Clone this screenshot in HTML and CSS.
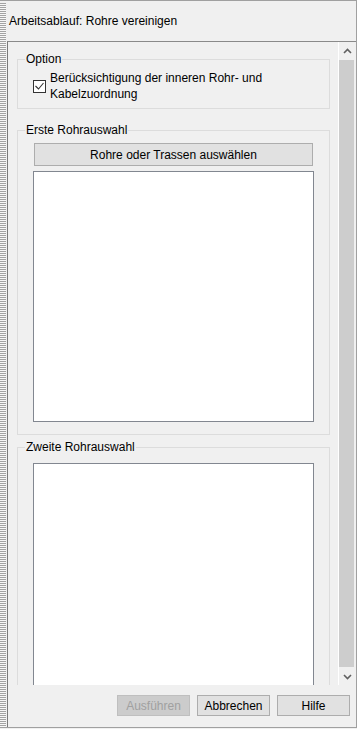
FILE: index.html
```html
<!DOCTYPE html>
<html lang="de">
<head>
    <meta charset="UTF-8">
    <meta name="viewport" content="width=device-width, initial-scale=1.0">
    <title>Rohre vereinigen</title>
    <link rel="stylesheet" href="styles.css">
</head>
<body>
    <div class="window">
        <div class="grip"></div>
        <div class="main">
            <div class="title">Arbeitsablauf: Rohre vereinigen</div>
            <div class="panel">
                <div class="scroll-area">
                    <div class="content">
                        <fieldset class="group">
                            <legend>Option</legend>
                            <label class="check-row">
                                <span class="checkbox">
                                    <svg width="11" height="11" viewBox="0 0 11 11">
                                        <polyline points="1.5,5 4.5,8 9.5,2" fill="none" stroke="#333" stroke-width="1.1"/>
                                    </svg>
                                </span>
                                <span class="check-text">Berücksichtigung der inneren Rohr- und Kabelzuordnung</span>
                            </label>
                        </fieldset>

                        <fieldset class="group first">
                            <legend>Erste Rohrauswahl</legend>
                            <button class="btn wide">Rohre oder Trassen auswählen</button>
                            <div class="list"></div>
                        </fieldset>

                        <fieldset class="group second">
                            <legend>Zweite Rohrauswahl</legend>
                            <div class="list tall"></div>
                        </fieldset>
                    </div>
                    <div class="scrollbar">
                        <div class="arrow">
                            <svg width="9" height="6" viewBox="0 0 9 6">
                                <polyline points="1,5 4.5,1.5 8,5" fill="none" stroke="#606060" stroke-width="1.6"/>
                            </svg>
                        </div>
                        <div class="thumb"></div>
                        <div class="arrow">
                            <svg width="9" height="6" viewBox="0 0 9 6">
                                <polyline points="1,1 4.5,4.5 8,1" fill="none" stroke="#606060" stroke-width="1.6"/>
                            </svg>
                        </div>
                    </div>
                </div>
                <div class="footer">
                    <button class="btn" disabled>Ausführen</button>
                    <button class="btn">Abbrechen</button>
                    <button class="btn">Hilfe</button>
                </div>
            </div>
        </div>
    </div>
</body>
</html>
```

FILE: styles.css
```css
* {
    margin: 0;
    padding: 0;
    box-sizing: border-box;
    font-family: "Liberation Sans", Arial, sans-serif;
}

body {
    background: #f0f0f0;
    font-size: 12px;
    color: #000;
}

.window {
    width: 357px;
    height: 728px;
    display: flex;
    background: #f0f0f0;
    border-top: 1px solid #a0a0a0;
    border-right: 1px solid #a0a0a0;
    border-bottom: 1px solid #a0a0a0;
}

/* striped resize grip on the left edge */
.grip {
    width: 6px;
    margin-top: 2px;
    background: repeating-linear-gradient(to bottom, #a3a3a3 0 1px, #f7f7f7 1px 2px);
}

.main {
    flex: 1;
    display: flex;
    flex-direction: column;
}

.title {
    height: 40px;
    padding: 13px 0 0 3px;
    line-height: 14px;
}

.panel {
    flex: 1;
    margin-left: 1px;
    display: flex;
    flex-direction: column;
    border-top: 1px solid #8a8a8a;
    border-left: 1px solid #7a7a7a;
}

.scroll-area {
    height: 643px;
    display: flex;
}

.content {
    flex: 1;
    overflow: hidden;
    padding: 10px 8px 0 9px;
}

.group {
    border: 1px solid #dcdcdc;
    line-height: 14px;
}

.group legend {
    margin-left: -8px;
    padding: 0 1px;
    line-height: 14px;
}

.group:first-child {
    padding: 4px 15px 6px 15px;
}

.group.first {
    margin-top: 14px;
    padding: 6px 15px 12px 15px;
}

.group.second {
    margin-top: 5px;
    padding: 9px 15px 0 15px;
}

.check-row {
    display: flex;
    align-items: center;
    line-height: 16px;
}

.checkbox {
    flex: none;
    width: 13px;
    height: 13px;
    margin-right: 4px;
    border: 1px solid #333;
    background: #fff;
    display: flex;
    align-items: center;
    justify-content: center;
}

.check-text {
    padding-right: 30px;
}

.btn {
    height: 21px;
    width: 73px;
    background: #e1e1e1;
    border: 1px solid #adadad;
    font-size: 12px;
    color: #000;
}

.btn:disabled {
    background: #cccccc;
    border-color: #bfbfbf;
    color: #a0a0a0;
}

.btn.wide {
    display: block;
    width: 279px;
    height: 23px;
    margin: 0 1px;
}

.list {
    height: 251px;
    margin-top: 5px;
    background: #fff;
    border: 1px solid #828790;
}

.group.second .list {
    margin-top: 0;
    height: 320px;
}

.scrollbar {
    width: 17px;
    margin-right: 1px;
    display: flex;
    flex-direction: column;
    background: #f0f0f0;
    border-left: 1px solid #fff;
}

.arrow {
    height: 17px;
    display: flex;
    align-items: center;
    justify-content: center;
}

.thumb {
    flex: 1;
    margin: 1px 1px 1px 0;
    background: #cdcdcd;
}

.footer {
    flex: 1;
    display: flex;
    justify-content: flex-end;
    gap: 7px;
    padding: 10px 6px 0 0;
}
```
